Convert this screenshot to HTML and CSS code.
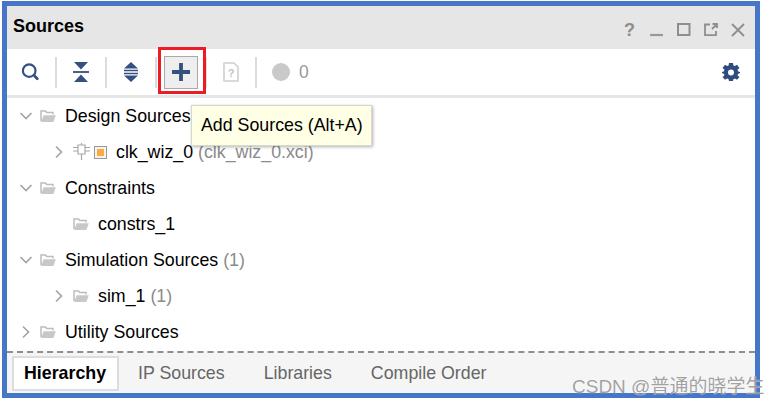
FILE: index.html
```html
<!DOCTYPE html>
<html lang="en">
<head>
    <meta charset="UTF-8">
    <title>Sources</title>
    <link rel="stylesheet" href="styles.css">
</head>
<body>
    <svg class="defs" width="0" height="0">
        <symbol id="folder" viewBox="0 0 16 14">
            <path d="M1 12V2h4.500l1.200 1.500H13v2" fill="none" stroke="#bdbdbd" stroke-width="1.500"/>
            <path d="M1 13 3.600 6.200H15.800L13.400 13Z" fill="#c8c8c8"/>
        </symbol>
        <symbol id="chev-down" viewBox="0 0 14 14">
            <path d="M1.500 4 7 9.500 12.500 4" fill="none" stroke="#a3a3a3" stroke-width="1.600"/>
        </symbol>
        <symbol id="chev-right" viewBox="0 0 14 14">
            <path d="M4 1.500 9.500 7 4 12.500" fill="none" stroke="#a3a3a3" stroke-width="1.600"/>
        </symbol>
    </svg>

    <div class="frame">
        <header class="title-bar">
            <h1>Sources</h1>
            <div class="win-btns">
                <span class="help">?</span>
                <svg width="14" height="14" viewBox="0 0 14 14"><path d="M0 12h13" stroke="#999" stroke-width="2.200"/></svg>
                <svg width="14" height="14" viewBox="0 0 14 14"><rect x="1" y="1" width="11.500" height="11" fill="none" stroke="#8e8e8e" stroke-width="2"/></svg>
                <svg width="14" height="14" viewBox="0 0 14 14"><path d="M6 1.500H1v10.700h11V8M8 6l4.500-4.500M8.500 1h4.500v4" fill="none" stroke="#8e8e8e" stroke-width="1.800"/></svg>
                <svg width="14" height="14" viewBox="0 0 14 14"><path d="M1 1l12 12M13 1 1 13" stroke="#8e8e8e" stroke-width="1.800"/></svg>
            </div>
        </header>

        <div class="toolbar">
            <span class="tool search">
                <svg width="20" height="20" viewBox="0 0 20 20"><circle cx="8" cy="8.500" r="7" fill="none" stroke="#34507f" stroke-width="2.400"/><path d="M14 14.500l3 3" stroke="#34507f" stroke-width="3" stroke-linecap="round"/></svg>
            </span>
            <i class="sep"></i>
            <span class="tool icon16">
                <svg width="16" height="20" viewBox="0 0 16 20"><path d="M1 0h14L8 7.500ZM1 20h14L8 12.500Z" fill="#34507f"/><path d="M0 10h16" stroke="#34507f" stroke-width="1.800"/></svg>
            </span>
            <i class="sep"></i>
            <span class="tool icon16">
                <svg width="16" height="20" viewBox="0 0 16 20"><path d="M8 0l7 6.500H1ZM8 20l7-6.500H1Z" fill="#34507f"/><path d="M1 8.500h14M1 11.500h14" stroke="#34507f" stroke-width="1.600"/></svg>
            </span>
            <i class="sep"></i>
            <span class="tool add-btn">
                <svg width="18" height="18" viewBox="0 0 18 18"><path d="M9 0v18M0 9h18" stroke="#34507f" stroke-width="3.800"/></svg>
            </span>
            <i class="sep"></i>
            <span class="tool icon16">
                <svg width="16" height="20" viewBox="0 0 16 20"><path d="M1 1h10l4 4v14H1Z" fill="none" stroke="#d0d0d0" stroke-width="1.600"/><text x="8" y="15" class="doc-q">?</text></svg>
            </span>
            <i class="sep"></i>
            <span class="status"><i class="dot"></i>0</span>
            <svg class="gear" width="18" height="18" viewBox="0 0 18 18"><path d="M7 0h4l.4 2.400 1.500.7L15 1.700 17.500 5l-1.800 1.500.2 1.700L18 9v1l-2.100.9-.3 1.500 1.900 1.600L15 16.800l-2.100-1.300-1.500.7L11 18H7l-.4-1.800-1.500-.7L3 16.800.5 14l1.900-1.600-.3-1.500L0 10V9l2.100-.8.200-1.700L.5 5 3 1.700l2.100 1.400 1.500-.7Z" fill="#2f4c80"/><circle cx="9" cy="9.500" r="3" fill="#fff"/></svg>
        </div>

        <ul class="tree">
            <li class="row">
                <svg class="chev"><use href="#chev-down"/></svg>
                <svg class="folder"><use href="#folder"/></svg>
                <span>Design Sources</span>
            </li>
            <li class="row sub">
                <svg class="chev"><use href="#chev-right"/></svg>
                <svg class="pin" width="17" height="18" viewBox="0 0 17 18"><path d="M5 2h7v9H5ZM8.500 11v6M0 4.500h5M0 8h5M12 4.500h5M12 8h5M8.500 0v2" fill="none" stroke="#a8a8a8" stroke-width="1.200"/></svg>
                <i class="ip-box"></i>
                <span>clk_wiz_0 <em>(clk_wiz_0.xci)</em></span>
            </li>
            <li class="row">
                <svg class="chev"><use href="#chev-down"/></svg>
                <svg class="folder"><use href="#folder"/></svg>
                <span>Constraints</span>
            </li>
            <li class="row sub">
                <span class="chev"></span>
                <svg class="folder"><use href="#folder"/></svg>
                <span>constrs_1</span>
            </li>
            <li class="row">
                <svg class="chev"><use href="#chev-down"/></svg>
                <svg class="folder"><use href="#folder"/></svg>
                <span>Simulation Sources <em>(1)</em></span>
            </li>
            <li class="row sub">
                <svg class="chev"><use href="#chev-right"/></svg>
                <svg class="folder"><use href="#folder"/></svg>
                <span>sim_1 <em>(1)</em></span>
            </li>
            <li class="row">
                <svg class="chev"><use href="#chev-right"/></svg>
                <svg class="folder"><use href="#folder"/></svg>
                <span>Utility Sources</span>
            </li>
        </ul>

        <nav class="tabs">
            <a class="tab active">Hierarchy</a>
            <a class="tab">IP Sources</a>
            <a class="tab">Libraries</a>
            <a class="tab">Compile Order</a>
        </nav>

        <div class="highlight"></div>
        <div class="tooltip">Add Sources (Alt+A)</div>
    </div>

    <div class="watermark">CSDN @普通的晓学生</div>
</body>
</html>
```

FILE: styles.css
```css
:root {
    --frame : #4676c8;
    --grey-text : #8b8b8b;
}

* {
    box-sizing : border-box;
}

body {
    margin : 0;
    background-color : white;
    font-family : "Liberation Sans", Arial, sans-serif;
    overflow : hidden;
}

.defs {
    position : absolute;
}

.frame {
    position : relative;
    display : flex;
    flex-direction : column;
    width : 758px;
    height : 397px;
    margin : 1px 0 0 2px;
    border : 5px solid var(--frame);
    background-color : white;
}

.title-bar {
    display : flex;
    align-items : center;
    justify-content : space-between;
    height : 43px;
    padding : 0 10px 0 6px;
    background-color : #e6e6e6;
}

h1 {
    margin : 0 0 2px;
    font-size : 18px;
    font-weight : bold;
    color : #000;
}

.win-btns {
    display : flex;
    align-items : center;
    gap : 13px;
    margin-top : 4px;
}

.help {
    width : 13px;
    font-size : 18px;
    font-weight : bold;
    line-height : 14px;
    color : #8e8e8e;
}

.toolbar {
    display : flex;
    align-items : center;
    height : 46px;
    padding-left : 15px;
}

.tool {
    display : flex;
    align-items : center;
    justify-content : center;
}

.search {
    width : 18px;
    margin-right : -1px;
}

.icon16 {
    width : 16px;
}

.sep {
    width : 2px;
    height : 31px;
    margin : 0 16px;
    background-color : #dcdcdc;
}

.add-btn {
    width : 34px;
    height : 33px;
    margin : 0 -9px;
    border : 1px solid #aaa;
    background-color : #eeeeee;
}

.status {
    display : flex;
    align-items : center;
    gap : 9px;
    margin-left : -1px;
    font-size : 17.500px;
    color : #999;
}

.dot {
    width : 18px;
    height : 18px;
    border-radius : 50%;
    background-color : #c9c9c9;
}

.gear {
    margin-left : auto;
    margin-right : 15px;
}

.doc-q {
    font-family : "Liberation Sans", sans-serif;
    font-size : 11px;
    font-weight : bold;
    text-anchor : middle;
    fill : #c4c4c4;
}

.tree {
    flex : 1;
    margin : 0;
    padding : 0;
    list-style : none;
    border-top : 3px solid #e6e6e6;
    overflow : hidden;
}

.row {
    display : flex;
    align-items : center;
    height : 36px;
    padding-left : 12px;
    font-size : 17.800px;
    color : #000;
    white-space : nowrap;
}

.row.sub {
    padding-left : 45px;
}

.row em {
    font-style : normal;
    color : var(--grey-text);
}

.chev {
    width : 14px;
    height : 14px;
    margin-right : 7px;
}

.folder {
    width : 16px;
    height : 14px;
    margin-right : 9px;
}

.pin {
    margin-right : 4px;
}

.ip-box {
    display : block;
    width : 13px;
    height : 13px;
    margin-right : 9px;
    border : 1px solid #999;
    background-color : #ffa93e;
    box-shadow : inset 0 0 0 2px #f4f4f4;
}

.tabs {
    display : flex;
    align-items : center;
    gap : 39px;
    height : 42px;
    padding-left : 5px;
    border-top : 2px dashed #8f8f8f;
    background-color : #f5f5f5;
}

.tab {
    font-size : 17.800px;
    color : #666;
}

.tab.active {
    width : 107px;
    margin-right : -20px;
    padding : 5px 10px;
    border : 2px solid #dddddd;
    background-color : white;
    font-weight : bold;
    color : #000;
}

.highlight {
    position : absolute;
    left : 151px;
    top : 41px;
    width : 48px;
    height : 47px;
    border : 3px solid #ed1c24;
}

.tooltip {
    position : absolute;
    left : 184px;
    top : 99px;
    width : 181px;
    height : 41px;
    padding-left : 9px;
    border : 1px solid #d9d9c8;
    background-color : #ffffe5;
    box-shadow : 1px 1px 3px rgba(0, 0, 0, 0.3);
    font-size : 17.800px;
    line-height : 38px;
    color : #000;
    white-space : nowrap;
}

.watermark {
    position : absolute;
    left : 572px;
    top : 377px;
    font-family : "Liberation Sans", "Noto Sans CJK SC", sans-serif;
    font-size : 19px;
    line-height : 20px;
    color : rgba(120, 120, 120, 0.7);
    text-shadow : 0 0 1px white;
    white-space : nowrap;
}
```
